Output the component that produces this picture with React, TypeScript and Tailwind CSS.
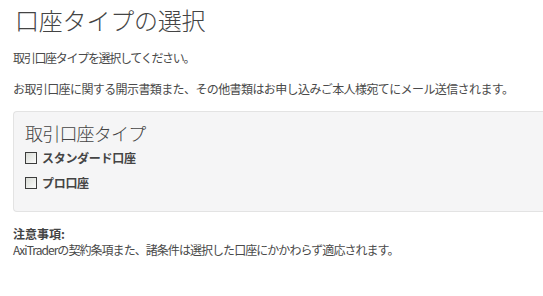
const jp = "font-['MS_PGothic','Noto_Sans_CJK_JP',sans-serif]"

function Checkbox({ label }: { label: string }) {
  return (
    <label className="flex items-center gap-[5px] h-[25px]">
      <span className="h-[12px] w-[12px] border border-[#3c3c3c] bg-gradient-to-br from-[#d9dcd6] to-[#fbfbfb]" />
      <span className="text-[12px] font-bold text-[#444] tracking-[-0.3px]">{label}</span>
    </label>
  )
}

export default function App() {
  return (
    <div className={`${jp} h-[296px] w-full overflow-hidden bg-white text-[#4a4a4a]`}>
      <div className="pl-[13px] pt-[3px]">
        {/* Title */}
        <h1 className="pl-[2px] text-[24px] font-light leading-[34px] text-[#444] tracking-[-0.2px]">
          口座タイプの選択
        </h1>

        <p className="mt-[13px] text-[12px] leading-[16px] tracking-[-1.3px]">
          取引口座タイプを選択してください。
        </p>
        <p className="mt-[15px] text-[12px] leading-[16px] tracking-[-0.6px]">
          お取引口座に関する開示書類また、その他書類はお申し込みご本人様宛てにメール送信されます。
        </p>

        {/* Account type panel */}
        <div className="mt-[14px] h-[101px] rounded-l-[4px] border border-r-0 border-[#e3e3e3] bg-[#f5f5f6] pl-[11px] pt-[9px]">
          <h2 className="text-[18px] font-light leading-[24px] text-[#444] tracking-[-0.8px]">取引口座タイプ</h2>
          <Checkbox label="スタンダード口座" />
          <Checkbox label="プロ口座" />
        </div>

        {/* Notes */}
        <div className="mt-[14px]">
          <p className="text-[12px] font-bold leading-[16px] text-[#444]">注意事項:</p>
          <p className="text-[12px] leading-[16px] tracking-[-0.95px]">
            AxiTraderの契約条項また、諸条件は選択した口座にかかわらず適応されます。
          </p>
        </div>
      </div>
    </div>
  )
}
